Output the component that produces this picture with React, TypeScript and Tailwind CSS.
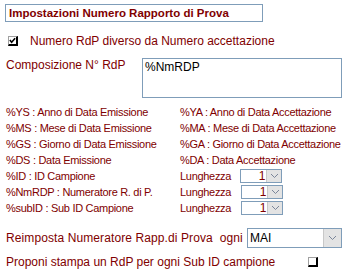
import React from "react";

function Chevron() {
  return (
    <svg width="9" height="6" viewBox="0 0 9 6" className="block">
      <path d="M1 1 L4.5 4.5 L8 1" fill="none" stroke="#7a8599" strokeWidth="1" />
    </svg>
  );
}

function SmallSelect({ className = "" }: { className?: string }) {
  return (
    <div className={"flex h-[14px] w-[42px] border border-[#7f9db9] bg-white " + className}>
      <div className="flex-1 text-right pr-[1px] text-[12px] leading-[12px] text-[#800000]">1</div>
      <div className="w-[15px] bg-[#e3e3e3] border-l border-[#c8c8c8] flex items-center justify-center">
        <Chevron />
      </div>
    </div>
  );
}

function Row({ left, right }: { left: string; right: React.ReactNode }) {
  return (
    <div className="flex h-[16px] items-center">
      <div className="w-[174px] shrink-0">{left}</div>
      <div>{right}</div>
    </div>
  );
}

export default function App() {
  return (
    <div className="w-[352px] h-[278px] bg-white overflow-hidden font-['Liberation_Sans',Arial,sans-serif] text-[#800000]">
      <div className="pt-[4px] pl-[5px]">
        <div className="w-[258px] h-[18px] border border-[#7f9db9] pl-[3px] text-[11.5px] font-bold leading-[16px]">
          Impostazioni Numero Rapporto di Prova
        </div>
      </div>

      <div className="flex items-center h-[20px] mt-[9px] pl-[8px]">
        <div className="w-[10px] h-[10px] bg-white border-r-2 border-b-2 border-black border-t border-l border-t-[#a0a0a0] border-l-[#a0a0a0] flex items-center justify-center">
          <svg width="8" height="7" viewBox="0 0 8 7" className="block">
            <path d="M1 3 L3 5.5 L7 1" fill="none" stroke="#000" strokeWidth="1.8" />
          </svg>
        </div>
        <div className="ml-[12px] text-[12px]">Numero RdP diverso da Numero accettazione</div>
      </div>

      <div className="flex mt-[7px] pl-[6px]">
        <div className="w-[136px] text-[12px] leading-[14px] pt-[0px]">Composizione N° RdP</div>
        <div className="w-[200px] h-[40px] border border-[#7f9db9] px-[2px] text-[12px] leading-[16px] text-black">
          %NmRDP
        </div>
      </div>

      <div className="mt-[6px] pl-[6px] text-[11px] tracking-[-0.3px]">
        <Row left="%YS : Anno di Data Emissione" right="%YA : Anno di Data Accettazione" />
        <Row left="%MS : Mese di Data Emissione" right="%MA : Mese di Data Accettazione" />
        <Row left="%GS : Giorno di Data Emissione" right="%GA : Giorno di Data Accettazione" />
        <Row left="%DS : Data Emissione" right="%DA : Data Accettazione" />
        <Row
          left="%ID : ID Campione"
          right={
            <div className="flex items-center">
              <span className="w-[60px]">Lunghezza</span>
              <SmallSelect />
            </div>
          }
        />
        <Row
          left="%NmRDP : Numeratore R. di P."
          right={
            <div className="flex items-center">
              <span className="w-[61px]">Lunghezza</span>
              <SmallSelect />
            </div>
          }
        />
        <Row
          left="%subID : Sub ID Campione"
          right={
            <div className="flex items-center">
              <span className="w-[61px]">Lunghezza</span>
              <SmallSelect />
            </div>
          }
        />
      </div>

      <div className="flex items-center mt-[12px] pl-[6px] h-[20px]">
        <div className="w-[241px] text-[12px] whitespace-nowrap tracking-[0.1px]">
          Reimposta Numeratore Rapp.di Prova&nbsp; ogni
        </div>
        <div className="flex w-[95px] h-[20px] border border-[#7f9db9] bg-white">
          <div className="flex-1 pl-[2px] text-[12px] leading-[18px] text-black">MAI</div>
          <div className="w-[18px] bg-[#e3e3e3] border-l border-[#c8c8c8] flex items-center justify-center">
            <Chevron />
          </div>
        </div>
      </div>

      <div className="flex items-center mt-[6px] pl-[6px] h-[16px]">
        <div className="w-[302px] text-[12px] whitespace-nowrap">Proponi stampa un RdP per ogni Sub ID campione</div>
        <div className="w-[10px] h-[10px] bg-white border-r-2 border-b-2 border-black border-t border-l border-t-[#a0a0a0] border-l-[#a0a0a0]" />
      </div>
    </div>
  );
}
